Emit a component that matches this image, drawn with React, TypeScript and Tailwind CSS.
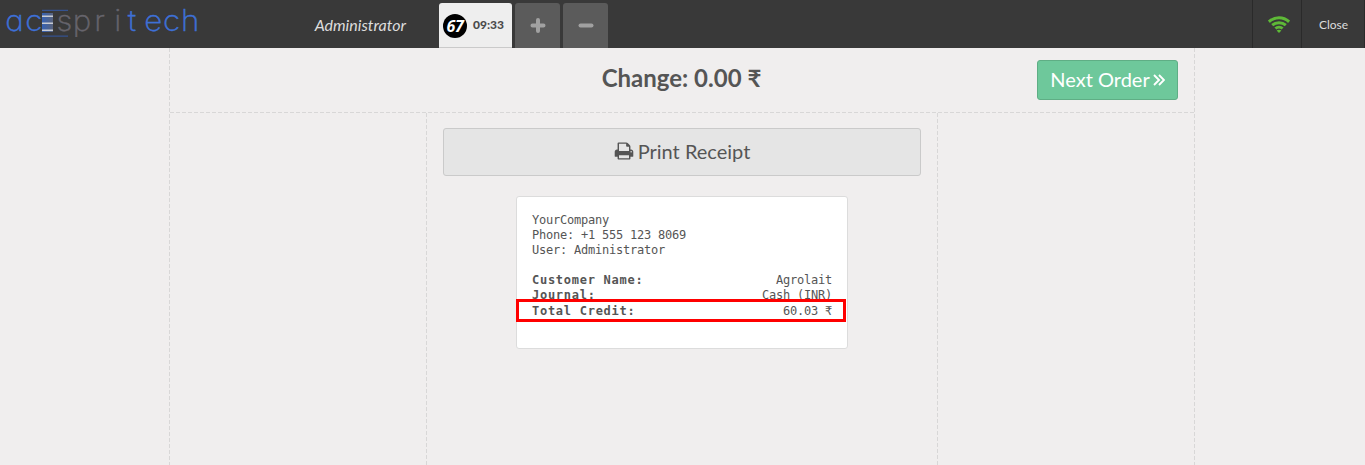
import React from "react";

function Logo() {
  return (
    <svg width="206" height="48" viewBox="0 0 206 48" className="shrink-0">
      <defs>
        <linearGradient id="bar" x1="0" x2="1">
          <stop offset="0" stopColor="#3562b5" />
          <stop offset="1" stopColor="#59637c" />
        </linearGradient>
      </defs>
      <path d="M42 10.3H68M42 36.2H68" stroke="#34528f" strokeWidth="1.3" />
      <rect x="42" y="13" width="11" height="19" fill="url(#bar)" />
      <path d="M42 16.3H53M42 23.3H53M42 30.3H53" stroke="#c8ccd4" strokeWidth="1.5" />
      <g
        fill="#3e70d6"
        stroke="#3e70d6"
        strokeWidth="0.4"
        fontSize="29.5"
        transform="scale(1.06 1)"
        className="font-['Inter',sans-serif] font-extralight [font-feature-settings:'cv11']"
      >
        <text y="31" x="5 23.8">ac</text>
        <text y="31" x="53.4 68.6 89 107.8" fill="#66646c" stroke="#66646c">
          spri
        </text>
        <text y="31" x="120.5 136 153.7 170.8">tech</text>
      </g>
    </svg>
  );
}

function WifiIcon() {
  return (
    <svg width="22" height="17" viewBox="0 0 22 17" fill="none" stroke="#5eb937" strokeWidth="3">
      <path d="M.9 5.8C6.6.5 15.4.5 21.1 5.8M4.2 9.2C8 5.8 14 5.8 17.8 9.2M7.4 12.5c2-1.8 5.2-1.8 7.2 0" />
      <path d="M11 16.9 8.6 14.6q2.4-1.6 4.8 0Z" fill="#5eb937" stroke="none" />
    </svg>
  );
}

function PrintIcon() {
  return (
    <svg width="20" height="20" viewBox="0 0 1792 1792" fill="currentColor">
      <path d="M448 1536h896v-256h-896v256zm0-640h896v-384h-160q-40 0-68-28t-28-68v-160h-640v640zm1152 64q0-26-19-45t-45-19-45 19-19 45 19 45 45 19 45-19 19-45zm128 0v416q0 13-9.5 22.5t-22.5 9.5h-224v160q0 40-28 68t-68 28h-960q-40 0-68-28t-28-68v-160h-224q-13 0-22.5-9.5t-9.5-22.5v-416q0-79 56.5-135.5t135.5-56.5h64v-544q0-40 28-68t68-28h672q40 0 88 20t76 48l152 152q28 28 48 76t20 88v256h64q79 0 135.5 56.5t56.5 135.5z" />
    </svg>
  );
}

const hDash = "bg-[repeating-linear-gradient(90deg,#d8d7d7_0_4px,transparent_4px_6px)]";
const vDash = "bg-[repeating-linear-gradient(180deg,#d8d7d7_0_4px,transparent_4px_6px)]";

function Header() {
  return (
    <header className="flex h-12 shrink-0 bg-[#393939]">
      <Logo />
      <div className="w-[200px] pt-[13px] text-right text-[16px] leading-6 text-[#ddd] italic">Administrator</div>
      <div className="ml-[33px] flex gap-[3px] pt-[3px]">
        <div className="flex w-[73px] items-center rounded-t-[3px] border-b border-[#cacaca] bg-[#eee] pl-1">
          <span className="mt-[2px] flex size-6 items-center justify-center rounded-full bg-black font-['Open_Sans',sans-serif] text-[16px] font-bold tracking-[-0.2px] text-white italic">
            67
          </span>
          <span className="ml-1.5 text-[12px] font-black text-[#4b4b4b]">09:33</span>
        </div>
        <button className="flex w-[45px] items-center justify-center rounded-t-[3px] bg-[#5b5b5b]">
          <svg width="16" height="16" viewBox="0 0 16 16">
            <path d="M2.5 7.5h11M8 2v11" stroke="#a1a1a1" strokeWidth="4" strokeLinecap="round" />
          </svg>
        </button>
        <button className="flex w-[45px] items-center justify-center rounded-t-[3px] bg-[#5b5b5b]">
          <svg width="16" height="16" viewBox="0 0 16 16">
            <path d="M2.5 7.5h11" stroke="#a1a1a1" strokeWidth="4" strokeLinecap="round" />
          </svg>
        </button>
      </div>
      <div className="ml-auto flex w-[49px] items-center justify-center border-l border-[#2a2a2a] pl-1">
        <WifiIcon />
      </div>
      <button className="w-16 border-x border-[#2a2a2a] pt-0.5 pl-px text-[12px] text-[#ddd]">Close</button>
    </header>
  );
}

function Row({ label, value }: { label: string; value: string }) {
  return (
    <div className="flex justify-between">
      <span className="font-bold tracking-[0.73px]">{label}</span>
      <span>{value}</span>
    </div>
  );
}

function Receipt() {
  return (
    <div className="relative mx-auto mt-5 h-[153px] w-[332px] rounded-[3px] border border-[#dcdcdc] bg-white px-[15px] pt-4 font-['DejaVu_Sans_Mono',monospace] text-[12px] leading-[15px] tracking-[-0.22px] text-[#555]">
      <div>YourCompany</div>
      <div>Phone: +1 555 123 8069</div>
      <div>User: Administrator</div>
      <div className="mt-[15px]">
        <Row label="Customer Name:" value="Agrolait" />
        <Row label="Journal:" value="Cash (INR)" />
        <div className="pt-px">
          <Row label="Total Credit:" value="60.03 ₹" />
        </div>
      </div>
      <div className="absolute top-[102px] -left-px h-[23px] w-[330px] border-3 border-[#f00]" />
    </div>
  );
}

export default function App() {
  return (
    <div className="flex h-[465px] w-[1365px] flex-col overflow-hidden bg-[#f0eeee] font-['Lato',sans-serif] text-[#555]">
      <Header />
      <main className="ml-[169px] flex w-[1026px] flex-1">
        <div className={`w-px ${vDash}`} />
        <div className="flex flex-1 flex-col">
          <div className="grid h-16 grid-cols-[1fr_auto_1fr] items-start">
            <h1 className="col-start-2 mt-[12px] mr-px text-[24px] leading-9 font-bold">Change: 0.00 ₹</h1>
            <button className="mt-3 mr-4 flex h-10 w-[141px] items-center justify-center gap-[3px] justify-self-end rounded-[3px] border border-[#5fae85] bg-[#6ec89b] pb-0.5 text-[20px] text-white">
              Next Order
              <svg width="12" height="12" viewBox="0 0 12 12" fill="none" stroke="currentColor" strokeWidth="1.9" className="mt-0.5">
                <path d="m1 1 5 5-5 5M6 1l5 5-5 5" />
              </svg>
            </button>
          </div>
          <div className={`h-px ${hDash}`} />
          <div className="flex flex-1">
            <div className="w-64" />
            <div className={`w-px ${vDash}`} />
            <div className="w-[510px] px-4 pt-[15px]">
              <button className="flex h-12 w-full items-center justify-center gap-1 rounded-[3px] border border-[#cacaca] bg-[#e5e5e5] pb-0.5 text-[20px]">
                <PrintIcon />
                Print Receipt
              </button>
              <Receipt />
            </div>
            <div className={`w-px ${vDash}`} />
          </div>
        </div>
        <div className={`w-px ${vDash}`} />
      </main>
    </div>
  );
}
